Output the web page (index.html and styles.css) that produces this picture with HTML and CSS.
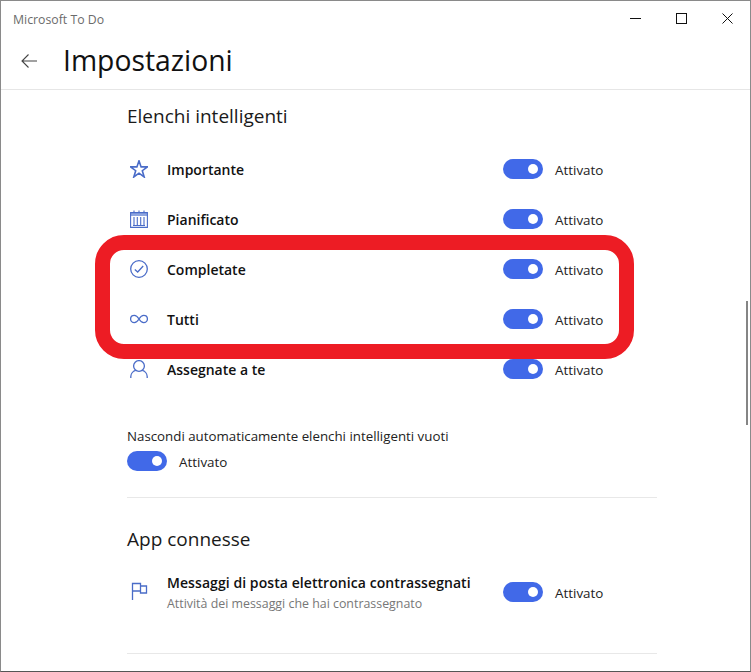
FILE: index.html
```html
<!DOCTYPE html>
<html lang="it">
<head>
<meta charset="utf-8">
<title>Microsoft To Do</title>
<link rel="stylesheet" href="styles.css">
</head>
<body>
<div class="window">
  <div class="titlebar">
    <span class="app-name">Microsoft To Do</span>
    <div class="win-controls">
      <svg class="win-icon" viewBox="0 0 11 11"><path d="M0 5.5H11" /></svg>
      <svg class="win-icon" viewBox="0 0 11 11"><rect x="0.5" y="0.5" width="10" height="10" /></svg>
      <svg class="win-icon" viewBox="0 0 11 11"><path d="M0.5 0.5L10.5 10.5M10.5 0.5L0.5 10.5" /></svg>
    </div>
  </div>
  <header class="page-head">
    <svg class="back" viewBox="0 0 16 14"><path d="M16 7H1M7.5 .5L1 7L7.5 13.5" /></svg>
    <h1>Impostazioni</h1>
  </header>
  <main class="content">
    <h2 class="section-title first">Elenchi intelligenti</h2>
    <div class="rows">
      <div class="row">
        <svg class="icon icon-bold" viewBox="0 0 18 18"><path d="M9 .8L11.1 6.9H17.4L12.3 10.7L14.2 17L9 13.2L3.8 17L5.7 10.7L.6 6.9H6.9Z" /></svg>
        <span class="label">Importante</span>
        <div class="switch-wrap"><span class="switch"></span><span class="state">Attivato</span></div>
      </div>
      <div class="row">
        <svg class="icon icon-calendar" viewBox="0 0 18 18"><rect class="band" x="0.5" y="2.5" width="17" height="3.5" /><path d="M.6 2.6H17.4V17.4H.6ZM4 .5V2.6M9 .5V2.6M14 .5V2.6M4 7V15.5M7.3 7V15.5M10.7 7V15.5M14 7V15.5M3 15.5H15" /></svg>
        <span class="label">Pianificato</span>
        <div class="switch-wrap"><span class="switch"></span><span class="state">Attivato</span></div>
      </div>
      <div class="row">
        <svg class="icon" viewBox="0 0 18 18"><circle cx="9" cy="9" r="8.3" /><path d="M4.8 9.4L7.7 12L13.2 6" /></svg>
        <span class="label">Completate</span>
        <div class="switch-wrap"><span class="switch"></span><span class="state">Attivato</span></div>
      </div>
      <div class="row">
        <svg class="icon" viewBox="0 0 18 18"><path d="M9 9C7.5 6.6 6 5.3 4.3 5.3C2.2 5.3 .6 6.9 .6 9C.6 11.1 2.2 12.7 4.3 12.7C6 12.7 7.5 11.4 9 9C10.5 6.6 12 5.3 13.7 5.3C15.8 5.3 17.4 6.9 17.4 9C17.4 11.1 15.8 12.7 13.7 12.7C12 12.7 10.5 11.4 9 9Z" /></svg>
        <span class="label">Tutti</span>
        <div class="switch-wrap"><span class="switch"></span><span class="state">Attivato</span></div>
      </div>
      <div class="row">
        <svg class="icon" viewBox="0 0 18 18"><circle cx="9" cy="6" r="5.4" /><path d="M.8 18V16.5C.8 13.5 3.2 11 5.8 10.4M17.2 18V16.5C17.2 13.5 14.8 11 12.2 10.4" /></svg>
        <span class="label">Assegnate a te</span>
        <div class="switch-wrap"><span class="switch"></span><span class="state">Attivato</span></div>
      </div>
    </div>
    <div class="auto-hide">
      <div class="auto-label">Nascondi automaticamente elenchi intelligenti vuoti</div>
      <div class="switch-wrap"><span class="switch"></span><span class="state">Attivato</span></div>
    </div>
    <hr class="sep sep-a">
    <h2 class="section-title">App connesse</h2>
    <div class="row row-flagged">
      <svg class="icon icon-flag" viewBox="0 0 18 18"><path d="M2.5 18V1.5H10.5V4H16.5V11H10.5V9H2.5M10.5 4V9" /></svg>
      <div class="label-stack">
        <span class="label">Messaggi di posta elettronica contrassegnati</span>
        <span class="sub">Attività dei messaggi che hai contrassegnato</span>
      </div>
      <div class="switch-wrap"><span class="switch"></span><span class="state">Attivato</span></div>
    </div>
    <hr class="sep sep-b">
  </main>
  <div class="highlight"></div>
  <div class="scrollbar"></div>
</div>
</body>
</html>
```
FILE: styles.css
```css
* { box-sizing: border-box; }
html, body { margin: 0; padding: 0; background: #fff; }
body { width: 751px; height: 672px; overflow: hidden; font-family: "Open Sans", "Noto Sans", sans-serif; color: #111; }
.window { position: relative; width: 751px; height: 672px; border: 1px solid #8a8a8a; border-bottom-color: #555; background: #fff; overflow: hidden; }
.titlebar { height: 37px; display: flex; align-items: center; justify-content: space-between; padding-left: 12px; }
.app-name { font-size: 12.3px; color: #6b6b6b; }
.win-controls { display: flex; gap: 35px; padding-right: 17px; margin-bottom: 3px; }
.win-icon { width: 11px; height: 11px; fill: none; stroke: #111; stroke-width: 1; }
.page-head { height: 52px; display: flex; align-items: center; padding-left: 20px; border-bottom: 1px solid #e6e6e6; }
.back { width: 16px; height: 14px; margin-bottom: 5px; fill: none; stroke: #444; stroke-width: 1.1; }
h1 { margin: 0 0 7px 26px; font-size: 28.3px; font-weight: 400; color: #111; line-height: 40px; }
.content { padding-left: 126px; width: 656px; }
.section-title { margin: 0; font-size: 19px; font-weight: 400; line-height: 26px; color: #1a1a1a; }
.section-title.first { margin-top: 13px; }
.rows { margin-top: 15px; }
.row { display: flex; align-items: center; height: 50px; }
.icon { width: 18px; height: 18px; margin-left: 3px; flex: none; fill: none; stroke: #4a6cc8; stroke-width: 1.3; }
.icon-bold { stroke-width: 1.6; }
.icon-calendar { stroke-width: 1.1; }
.icon-flag { margin-bottom: 2px; }
.band { fill: #8ea5e0; stroke: none; }
.label { margin-left: 19px; font-size: 14px; font-weight: 600; color: #111; white-space: nowrap; }
.row-flagged .label { letter-spacing: 0.07px; line-height: 20px; }
.row .switch-wrap { position: absolute; left: 502px; }
.switch-wrap { display: flex; align-items: center; }
.switch { position: relative; width: 40px; height: 20px; border-radius: 10px; background: #4169e8; flex: none; }
.switch::after { content: ""; position: absolute; right: 5px; top: 5px; width: 10px; height: 10px; border-radius: 50%; background: #fff; }
.state { margin-left: 12px; font-size: 13.4px; line-height: 22px; color: #222; position: relative; top: 1px; }
.auto-hide { margin-top: 33px; }
.auto-label { font-size: 13.3px; line-height: 18px; color: #222; white-space: nowrap; }
.auto-hide .switch-wrap { margin-top: 5px; }
.sep { border: 0; border-top: 1px solid #e8e8e8; margin: 0; }
.sep-a { margin-top: 25px; }
.section-title + .row-flagged { margin-top: 15px; }
.sep + .section-title { margin-top: 28px; }
.label-stack { display: flex; flex-direction: column; padding-top: 3px; }
.sub { margin: 1px 0 0 19px; font-size: 12.4px; line-height: 20px; color: #777; white-space: nowrap; }
.sep-b { margin-top: 36px; }
.highlight { position: absolute; left: 94px; top: 234px; width: 539px; height: 124px; border: 15px solid #ed1c24; border-radius: 29px; }
.scrollbar { position: absolute; left: 745px; top: 300px; width: 2px; height: 124px; background: #858585; }
```
